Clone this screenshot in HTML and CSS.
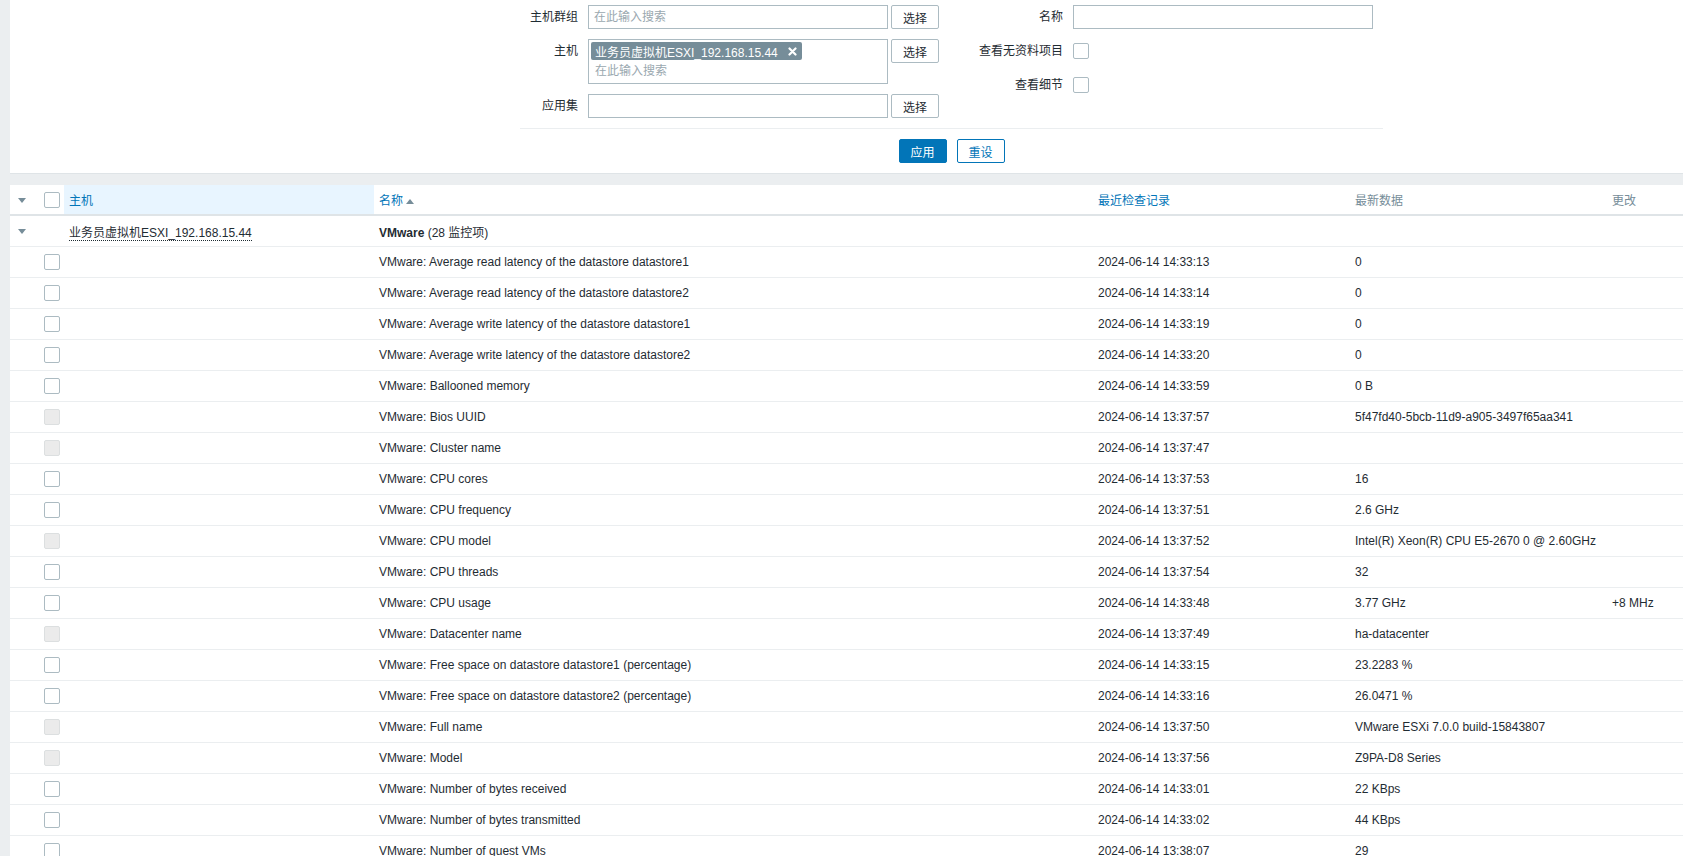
FILE: index.html
```html
<!DOCTYPE html>
<html lang="zh-CN">
<head>
  <meta charset="UTF-8" />
  <meta name="viewport" content="width=device-width, initial-scale=1.0"/>
  <title>最新数据</title>
  <link rel="stylesheet" href="styles.css">
</head>
<body>
  <div class="filter">
    <div class="filter-body">
      <div class="filter-columns">
        <div class="filter-col left">
          <div class="form-row">
            <label class="form-label">主机群组</label>
            <input class="text-input" type="text" placeholder="在此输入搜索">
            <button class="btn-select">选择</button>
          </div>
          <div class="form-row">
            <label class="form-label">主机</label>
            <div class="multiselect">
              <span class="tag">业务员虚拟机ESXI_192.168.15.44
                <svg class="tag-remove" width="9" height="9" viewBox="0 0 9 9"><path d="M1.5 1.5l6 6M7.5 1.5l-6 6" stroke="#fff" stroke-width="2.2" stroke-linecap="round"/></svg>
              </span>
              <input class="ms-input" type="text" placeholder="在此输入搜索">
            </div>
            <button class="btn-select">选择</button>
          </div>
          <div class="form-row">
            <label class="form-label">应用集</label>
            <input class="text-input" type="text">
            <button class="btn-select">选择</button>
          </div>
        </div>

        <div class="filter-col right">
          <div class="form-row">
            <label class="form-label">名称</label>
            <input class="text-input" type="text">
          </div>
          <div class="form-row">
            <label class="form-label">查看无资料项目</label>
            <span class="checkbox"></span>
          </div>
          <div class="form-row">
            <label class="form-label">查看细节</label>
            <span class="checkbox"></span>
          </div>
        </div>
      </div>

      <div class="filter-buttons">
        <button class="btn-apply">应用</button>
        <button class="btn-reset">重设</button>
      </div>
    </div>
  </div>

  <table class="list-table">
    <colgroup>
      <col class="c-toggle"><col class="c-check"><col class="c-host"><col class="c-name">
      <col class="c-clock"><col class="c-value"><col class="c-change">
    </colgroup>
    <thead>
      <tr>
        <th><span class="arrow-down"></span></th>
        <th><span class="checkbox"></span></th>
        <th class="sorted"><a href="#">主机</a></th>
        <th><a href="#">名称</a><span class="arrow-up"></span></th>
        <th><a href="#">最近检查记录</a></th>
        <th>最新数据</th>
        <th>更改</th>
      </tr>
    </thead>
    <tbody>
      <tr class="group-row">
        <td><span class="arrow-down"></span></td>
        <td></td>
        <td><span class="host-link">业务员虚拟机ESXI_192.168.15.44</span></td>
        <td><b>VMware</b> (28 监控项)</td>
        <td></td><td></td><td></td>
      </tr>
      <tr><td></td><td><span class="checkbox"></span></td><td></td><td>VMware: Average read latency of the datastore datastore1</td><td>2024-06-14 14:33:13</td><td>0</td><td></td></tr>
      <tr><td></td><td><span class="checkbox"></span></td><td></td><td>VMware: Average read latency of the datastore datastore2</td><td>2024-06-14 14:33:14</td><td>0</td><td></td></tr>
      <tr><td></td><td><span class="checkbox"></span></td><td></td><td>VMware: Average write latency of the datastore datastore1</td><td>2024-06-14 14:33:19</td><td>0</td><td></td></tr>
      <tr><td></td><td><span class="checkbox"></span></td><td></td><td>VMware: Average write latency of the datastore datastore2</td><td>2024-06-14 14:33:20</td><td>0</td><td></td></tr>
      <tr><td></td><td><span class="checkbox"></span></td><td></td><td>VMware: Ballooned memory</td><td>2024-06-14 14:33:59</td><td>0 B</td><td></td></tr>
      <tr><td></td><td><span class="checkbox disabled"></span></td><td></td><td>VMware: Bios UUID</td><td>2024-06-14 13:37:57</td><td>5f47fd40-5bcb-11d9-a905-3497f65aa341</td><td></td></tr>
      <tr><td></td><td><span class="checkbox disabled"></span></td><td></td><td>VMware: Cluster name</td><td>2024-06-14 13:37:47</td><td></td><td></td></tr>
      <tr><td></td><td><span class="checkbox"></span></td><td></td><td>VMware: CPU cores</td><td>2024-06-14 13:37:53</td><td>16</td><td></td></tr>
      <tr><td></td><td><span class="checkbox"></span></td><td></td><td>VMware: CPU frequency</td><td>2024-06-14 13:37:51</td><td>2.6 GHz</td><td></td></tr>
      <tr><td></td><td><span class="checkbox disabled"></span></td><td></td><td>VMware: CPU model</td><td>2024-06-14 13:37:52</td><td>Intel(R) Xeon(R) CPU E5-2670 0 @ 2.60GHz</td><td></td></tr>
      <tr><td></td><td><span class="checkbox"></span></td><td></td><td>VMware: CPU threads</td><td>2024-06-14 13:37:54</td><td>32</td><td></td></tr>
      <tr><td></td><td><span class="checkbox"></span></td><td></td><td>VMware: CPU usage</td><td>2024-06-14 14:33:48</td><td>3.77 GHz</td><td>+8 MHz</td></tr>
      <tr><td></td><td><span class="checkbox disabled"></span></td><td></td><td>VMware: Datacenter name</td><td>2024-06-14 13:37:49</td><td>ha-datacenter</td><td></td></tr>
      <tr><td></td><td><span class="checkbox"></span></td><td></td><td>VMware: Free space on datastore datastore1 (percentage)</td><td>2024-06-14 14:33:15</td><td>23.2283 %</td><td></td></tr>
      <tr><td></td><td><span class="checkbox"></span></td><td></td><td>VMware: Free space on datastore datastore2 (percentage)</td><td>2024-06-14 14:33:16</td><td>26.0471 %</td><td></td></tr>
      <tr><td></td><td><span class="checkbox disabled"></span></td><td></td><td>VMware: Full name</td><td>2024-06-14 13:37:50</td><td>VMware ESXi 7.0.0 build-15843807</td><td></td></tr>
      <tr><td></td><td><span class="checkbox disabled"></span></td><td></td><td>VMware: Model</td><td>2024-06-14 13:37:56</td><td>Z9PA-D8 Series</td><td></td></tr>
      <tr><td></td><td><span class="checkbox"></span></td><td></td><td>VMware: Number of bytes received</td><td>2024-06-14 14:33:01</td><td>22 KBps</td><td></td></tr>
      <tr><td></td><td><span class="checkbox"></span></td><td></td><td>VMware: Number of bytes transmitted</td><td>2024-06-14 14:33:02</td><td>44 KBps</td><td></td></tr>
      <tr><td></td><td><span class="checkbox"></span></td><td></td><td>VMware: Number of guest VMs</td><td>2024-06-14 13:38:07</td><td>29</td><td></td></tr>
      <tr><td></td><td><span class="checkbox"></span></td><td></td><td>VMware: Number of packets received</td><td>2024-06-14 14:33:03</td><td>38 ps</td><td></td></tr>
    </tbody>
  </table>
</body>
</html>
```

FILE: styles.css
```css
html, body {
  overflow: hidden;
}

body {
  margin: 0;
  background: #ebeef0;
  color: #1f2c33;
  font-family: "Liberation Sans", Arial, "Noto Sans CJK SC", sans-serif;
  font-size: 12px;
}

input, button {
  font-family: inherit;
  font-size: 12px;
  color: #1f2c33;
}

a {
  color: #0275b8;
  text-decoration: none;
}

/* filter */

.filter {
  margin-left: 10px;
  background: #fff;
  border-bottom: 1px solid #dfe4e7;
}

.filter-body {
  width: 863px;
  margin-left: 510px;
}

.filter-columns {
  display: flex;
  padding-top: 5px;
  padding-bottom: 10px;
  border-bottom: 1px solid #ebeef0;
}

.filter-col {
  display: flex;
  flex-direction: column;
  gap: 10px;
}

.form-row {
  display: flex;
  align-items: flex-start;
}

.form-label {
  line-height: 24px;
  text-align: right;
  margin-right: 10px;
  white-space: nowrap;
}

.left .form-label {
  width: 58px;
}

.right .form-label {
  width: 124px;
}

.right .form-row {
  height: 24px;
  align-items: center;
}

.text-input {
  box-sizing: border-box;
  width: 300px;
  height: 24px;
  padding: 0 5px;
  border: 1px solid #acbbc2;
  background: #fff;
  outline: none;
}

::placeholder {
  color: #9aa8af;
}

.btn-select {
  box-sizing: border-box;
  width: 48px;
  height: 24px;
  margin-left: 3px;
  padding: 0;
  border: 1px solid #acbbc2;
  border-radius: 2px;
  background: #fff;
}

.multiselect {
  box-sizing: border-box;
  width: 300px;
  height: 45px;
  padding: 2px 2px 0;
  border: 1px solid #acbbc2;
  background: #fff;
}

.tag {
  display: inline-flex;
  align-items: center;
  height: 18px;
  padding: 0 5px 0 4px;
  border-radius: 2px;
  background: #768d99;
  color: #fff;
}

.tag-remove {
  margin-left: 10px;
}

.ms-input {
  display: block;
  width: 280px;
  height: 18px;
  margin-top: 2px;
  padding: 0 0 0 4px;
  border: none;
  outline: none;
}

.filter-buttons {
  display: flex;
  justify-content: center;
  gap: 10px;
  padding: 10px 0;
}

.btn-apply, .btn-reset {
  box-sizing: border-box;
  width: 48px;
  height: 24px;
  padding: 0;
  border-radius: 2px;
  border: 1px solid #0275b8;
}

.btn-apply {
  background: #0275b8;
  color: #fff;
}

.btn-reset {
  background: #fff;
  color: #0275b8;
}

/* checkbox */

.checkbox {
  display: inline-block;
  box-sizing: border-box;
  width: 16px;
  height: 16px;
  border: 1px solid #acbbc2;
  border-radius: 2px;
  background: #fff;
  vertical-align: middle;
}

.checkbox.disabled {
  background: #ebebeb;
  border-color: #dcdfe0;
}

/* list */

.list-table {
  width: 1673px;
  margin: 11px 0 0 10px;
  table-layout: fixed;
  border-collapse: collapse;
  background: #fff;
}

.c-toggle { width: 24px; }
.c-check { width: 30px; }
.c-host { width: 310px; }
.c-name { width: 719px; }
.c-clock { width: 257px; }
.c-value { width: 257px; }
.c-change { width: 76px; }

.list-table th {
  height: 29px;
  padding: 0 5px;
  text-align: left;
  font-weight: normal;
  color: #768d99;
  border-bottom: 2px solid #dfe4e7;
  white-space: nowrap;
}

.list-table th.sorted {
  background: #e8f5ff;
}

.list-table td {
  height: 30px;
  padding: 0 5px;
  border-bottom: 1px solid #ebeef0;
  white-space: nowrap;
}

.list-table th:first-child, .list-table td:first-child {
  padding: 0;
  text-align: center;
}

.list-table th:nth-child(2), .list-table td:nth-child(2) {
  padding: 0 0 0 10px;
}

.arrow-down {
  display: inline-block;
  border-left: 4px solid transparent;
  border-right: 4px solid transparent;
  border-top: 5px solid #768d99;
  vertical-align: middle;
}

.arrow-up {
  display: inline-block;
  margin-left: 3px;
  border-left: 4px solid transparent;
  border-right: 4px solid transparent;
  border-bottom: 5px solid #768d99;
  vertical-align: middle;
}

.host-link {
  border-bottom: 1px dotted #1f2c33;
}
```
